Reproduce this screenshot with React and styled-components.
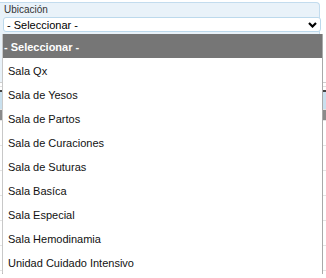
import styled, { createGlobalStyle } from 'styled-components';

const GlobalStyle = createGlobalStyle`
    body {
        margin: 0;
        background: #ffffff;
        font-family: 'Liberation Sans', Arial, sans-serif;
        color: #222;
    }
`;

const Page = styled.div`
    position: relative;
    width: 326px;
    height: 278px;
    overflow: hidden;
    padding-top: 2px;
    box-sizing: border-box;
`;

const Panel = styled.div`
    width: 320px;
    height: 80px;
    background: #e9f2f9;
    border-top: 1px solid #c3dcee;
    border-right: 1px solid #c3dcee;
    border-radius: 0 4px 0 0;
    padding: 1px 0 0 3px;
    box-sizing: border-box;
`;

const Label = styled.div`
    font-size: 10px;
    line-height: 12px;
    color: #333;
    padding-left: 1px;
`;

const SelectBox = styled.div`
    display: flex;
    align-items: center;
    justify-content: space-between;
    width: 318px;
    height: 15px;
    margin-top: 1px;
    background: #fff;
    border: 1px solid #bcd9ec;
    border-radius: 3px;
    box-sizing: border-box;
    padding: 0 3px 0 3px;
    font-size: 11px;
    color: #000;
`;

const Table = styled.div`
    width: 326px;
    border-top: 1px solid #cfcfcf;
`;

const TableHead = styled.div`
    height: 3px;
    border-top: 1px solid #e2e2e2;
    border-bottom: 2px solid #444;
    margin-top: 3px;
`;

const TableRow = styled.div`
    display: grid;
    grid-template-columns: 120px 100px 106px;
    height: ${({ $h }) => $h}px;
    background: ${({ $bg }) => $bg};
    border-bottom: 1px solid #e4e4e4;
    font-size: 11px;
    color: #777;
    align-items: end;
`;

const Cell = styled.div`
    padding-left: 10px;
`;

const List = styled.ul`
    position: absolute;
    top: 34px;
    left: 2px;
    width: 321px;
    height: 240px;
    margin: 0;
    padding: 0;
    list-style: none;
    background: #fff;
    border: 1px solid #c8c8c8;
    border-right-color: #a9a9a9;
    border-bottom-color: #a9a9a9;
    border-top: none;
    box-sizing: border-box;
`;

const Option = styled.li`
    height: 24px;
    line-height: 26px;
    font-size: 11px;
    padding-left: ${({ $selected }) => ($selected ? 1 : 5)}px;
    background: ${({ $selected }) => ($selected ? '#767676' : '#fff')};
    color: ${({ $selected }) => ($selected ? '#fff' : '#111')};
    font-weight: ${({ $selected }) => ($selected ? 700 : 400)};
    white-space: nowrap;
`;

const options = [
    'Sala Qx',
    'Sala de Yesos',
    'Sala de Partos',
    'Sala de Curaciones',
    'Sala de Suturas',
    'Sala Basíca',
    'Sala Especial',
    'Sala Hemodinamia',
    'Unidad Cuidado Intensivo'
];

const Chevron = () => (
    <svg width='9' height='6' viewBox='0 0 9 6'>
        <path
            d='M1 1 L4.5 4.5 L8 1'
            fill='none'
            stroke='#000'
            strokeWidth='2.2'
        />
    </svg>
);

const App = () => {
    return (
        <>
            <GlobalStyle />
            <Page>
                <Panel>
                    <Label>Ubicación</Label>
                    <SelectBox>
                        <span>- Seleccionar -</span>
                        <Chevron />
                    </SelectBox>
                </Panel>
                <Table>
                    <TableHead />
                    <TableRow $h={17} $bg='#c9e0ee' />
                    <TableRow $h={10} $bg='#8a8a8a' />
                    {Array.from({ length: 7 }).map((_, i) => (
                        <TableRow key={i} $h={24} $bg='#fff' />
                    ))}
                    <TableRow $h={16} $bg='#fff'>
                        <Cell />
                        <Cell>15.0000</Cell>
                        <Cell>2020-11-11</Cell>
                    </TableRow>
                </Table>
                <List>
                    <Option $selected>- Seleccionar -</Option>
                    {options.map((name) => (
                        <Option key={name}>{name}</Option>
                    ))}
                </List>
            </Page>
        </>
    );
};

export default App;
